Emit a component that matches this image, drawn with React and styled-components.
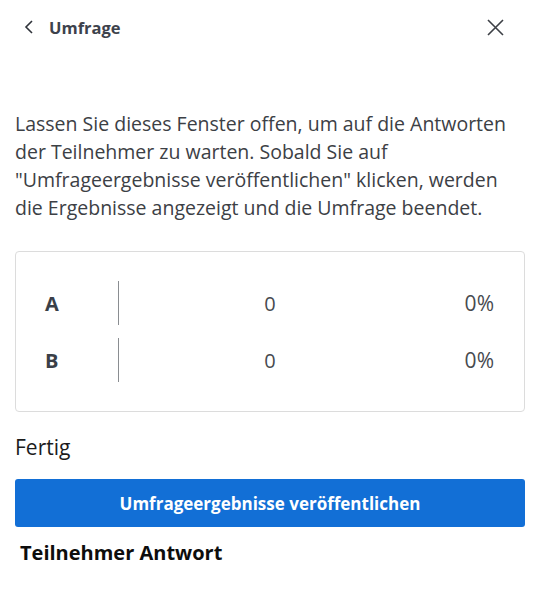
import React from "react";
import styled, { createGlobalStyle } from "styled-components";

const Global = createGlobalStyle`
  html, body { margin: 0; padding: 0; background: #fff; }
  body { font-family: "Open Sans", "Noto Sans", sans-serif; }
`;

const Page = styled.div`
  width: 536px;
  box-sizing: border-box;
  padding: 0 11px 0 15px;
  display: flex;
  flex-direction: column;
`;

const Header = styled.header`
  height: 54px;
  display: flex;
  align-items: center;
  justify-content: space-between;
`;

const Back = styled.button`
  display: flex;
  align-items: center;
  gap: 15px;
  border: 0;
  background: none;
  padding: 0 0 0 9px;
  font: 700 16.5px "Open Sans", sans-serif;
  color: #3d424c;
  cursor: pointer;
`;

const Close = styled.button`
  border: 0;
  background: none;
  padding: 0;
  margin-right: 21px;
  display: flex;
  cursor: pointer;
`;

const Intro = styled.p`
  margin: 56px 0 0;
  font-size: 19.5px;
  line-height: 28px;
  color: #3c4045;
`;

const Card = styled.div`
  margin-top: 29px;
  border: 1px solid #dcdcdc;
  border-radius: 4px;
  padding: 29px 0;
  display: flex;
  flex-direction: column;
  gap: 13px;
`;

const Row = styled.div`
  display: grid;
  grid-template-columns: 102px 1px 302px 1fr;
  height: 44px;
  align-items: center;
  font-size: 20px;
  color: #474a4f;
`;

const Label = styled.span`
  padding-left: 29px;
  font-weight: 700;
  color: #3a3f48;
`;

const Divider = styled.span`
  align-self: stretch;
  background: #8a8d91;
  width: 1px;
`;

const Count = styled.span`
  text-align: center;
`;

const Percent = styled.span`
  text-align: right;
  padding-right: 30px;
  font-size: 21px;
`;

const Status = styled.div`
  margin-top: 21px;
  font-size: 21px;
  line-height: 28px;
  color: #1c1c1c;
`;

const Publish = styled.button`
  margin-top: 18px;
  height: 48px;
  border: 0;
  border-radius: 3px;
  background: #126fd6;
  color: #fff;
  font: 700 17px "Open Sans", sans-serif;
  cursor: pointer;
`;

const Heading = styled.h3`
  margin: 12px 0 0;
  padding-left: 5px;
  font-size: 20px;
  line-height: 28px;
  font-weight: 700;
  color: #0d0d0d;
`;

const rows = [
  { label: "A", count: 0 },
  { label: "B", count: 0 },
];

export default function App() {
  return (
    <Page>
      <Global />
      <Header>
        <Back>
          <svg width="10" height="14" viewBox="0 0 10 14" fill="none">
            <path d="M8 1L2 7l6 6" stroke="#2f333a" strokeWidth="1.6" />
          </svg>
          Umfrage
        </Back>
        <Close aria-label="Schließen">
          <svg width="17" height="17" viewBox="0 0 17 17" fill="none">
            <path d="M1 1l15 15M16 1L1 16" stroke="#3d4046" strokeWidth="1.6" />
          </svg>
        </Close>
      </Header>
      <Intro>
        Lassen Sie dieses Fenster offen, um auf die Antworten der Teilnehmer zu
        warten. Sobald Sie auf "Umfrageergebnisse veröffentlichen" klicken,
        werden die Ergebnisse angezeigt und die Umfrage beendet.
      </Intro>
      <Card>
        {rows.map((r) => (
          <Row key={r.label}>
            <Label>{r.label}</Label>
            <Divider />
            <Count>{r.count}</Count>
            <Percent>{r.count}%</Percent>
          </Row>
        ))}
      </Card>
      <Status>Fertig</Status>
      <Publish>Umfrageergebnisse veröffentlichen</Publish>
      <Heading>Teilnehmer Antwort</Heading>
    </Page>
  );
}
